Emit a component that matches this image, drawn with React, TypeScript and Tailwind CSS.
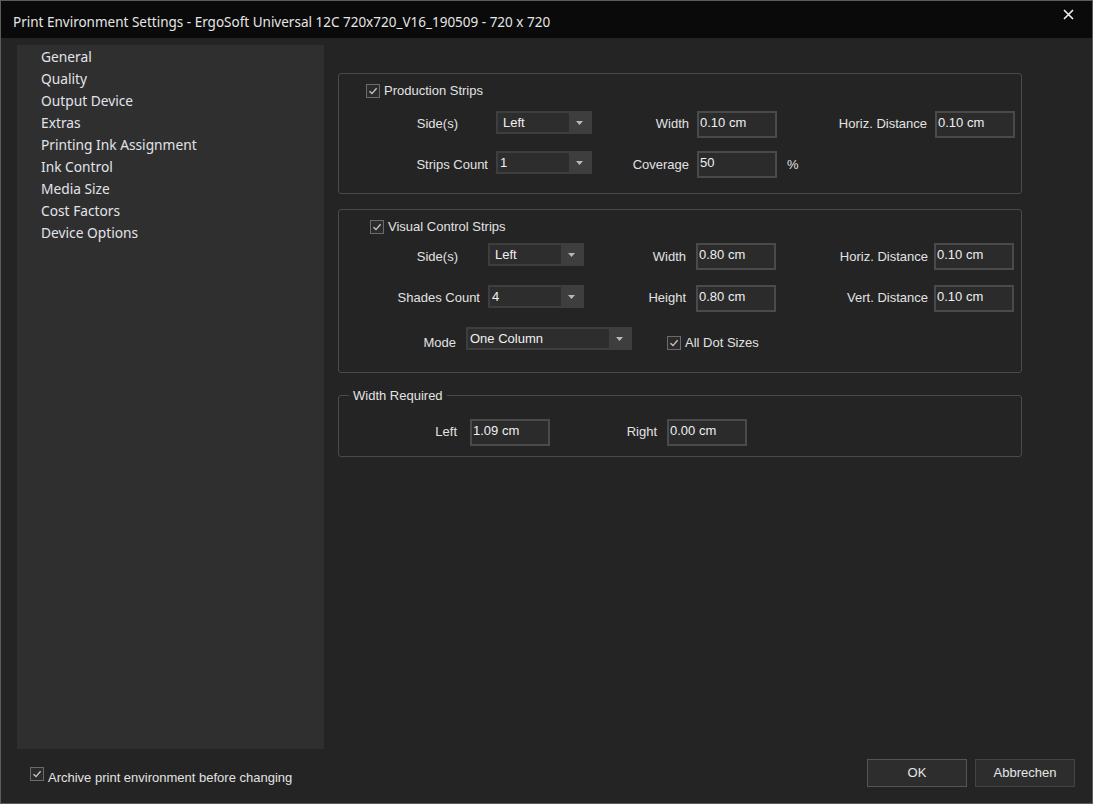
import React, { useState } from 'react';

const Check: React.FC<{ checked: boolean; onToggle: () => void }> = ({ checked, onToggle }) => (
  <button
    type="button"
    onClick={onToggle}
    className="flex h-[14px] w-[14px] shrink-0 items-center justify-center border border-[#6b6b6b] bg-[#2b2b2b]"
  >
    {checked && (
      <svg width="10" height="10" viewBox="0 0 10 10" fill="none">
        <path d="M1.5 5.2 L4 7.6 L8.6 2.2" stroke="#c4c4c4" strokeWidth="1.4" />
      </svg>
    )}
  </button>
);

const Combo: React.FC<{ value: string; w: string; pad: string }> = ({ value, w, pad }) => (
  <div className={`${w} flex h-[23px] shrink-0 bg-[#3e3e3e] p-[2px]`}>
    <div className={`flex flex-1 items-center bg-[#2d2d2d] ${pad} text-[#f0f0f0]`}>{value}</div>
    <div className="flex w-[21px] items-center justify-center">
      <svg width="7" height="4" viewBox="0 0 7 4">
        <path d="M0 0 H7 L3.5 4 Z" fill="#b8b8b8" />
      </svg>
    </div>
  </div>
);

const TextBox: React.FC<{ value: string; ml: string }> = ({ value, ml }) => (
  <div className={`${ml} h-[27px] w-[80px] shrink-0 border-2 border-[#4a4a4a] bg-[#2b2b2b] pl-[1px] leading-[19px] text-[#f0f0f0]`}>
    {value}
  </div>
);

const navItems = [
  'General',
  'Quality',
  'Output Device',
  'Extras',
  'Printing Ink Assignment',
  'Ink Control',
  'Media Size',
  'Cost Factors',
  'Device Options',
];

export default function App() {
  const [production, setProduction] = useState(true);
  const [visual, setVisual] = useState(true);
  const [allDots, setAllDots] = useState(true);
  const [archive, setArchive] = useState(true);

  return (
    <div className="flex h-[804px] w-[1093px] flex-col border border-[#5c5c5c] bg-[#242424] font-['Liberation_Sans',Arial,sans-serif] text-[13px] text-[#e2e2e2]">
      {/* title bar */}
      <div className="flex h-[37px] shrink-0 items-start justify-between bg-[#0a0a0a] pl-[12px] pr-[18px]">
        <span className="pt-[12px] font-['Noto_Sans',sans-serif] text-[13.5px] leading-[18px] text-[#e6e6e6]">
          Print Environment Settings - ErgoSoft Universal 12C 720x720_V16_190509 - 720 x 720
        </span>
        <svg className="mt-[8px]" width="11" height="11" viewBox="0 0 11 11">
          <path d="M1 1 L10 10 M10 1 L1 10" stroke="#f2f2f2" strokeWidth="1.6" />
        </svg>
      </div>

      <div className="flex flex-1 pl-[16px] pt-[7px]">
        {/* navigation */}
        <nav className="h-[704px] w-[307px] shrink-0 bg-[#2f2f2f] pl-[24px] pt-[1px] font-['Noto_Sans',sans-serif] text-[13.75px] leading-[22px] text-[#e2e4ea]">
          {navItems.map((item) => (
            <div key={item}>{item}</div>
          ))}
        </nav>

        {/* content */}
        <div className="ml-[14px] w-[684px] pt-[28px]">
          {/* production strips */}
          <div className="rounded-[3px] border border-[#4a4a4a] pb-[15px] pt-[10px]">
            <div className="flex items-center pl-[27px]">
              <Check checked={production} onToggle={() => setProduction(!production)} />
              <span className="ml-[4px] leading-[14px]">Production Strips</span>
            </div>
            <div className="mt-[13px] flex h-[27px] items-start">
              <span className="w-[119px] text-right leading-[25px]">Side(s)</span>
              <div className="ml-[38px]">
                <Combo value="Left" w="w-[96px]" pad="pl-[5px]" />
              </div>
              <span className="w-[97px] text-right leading-[25px]">Width</span>
              <TextBox value="0.10 cm" ml="ml-[8px]" />
              <span className="w-[150px] text-right leading-[25px]">Horiz. Distance</span>
              <TextBox value="0.10 cm" ml="ml-[8px]" />
            </div>
            <div className="mt-[13px] flex h-[27px] items-start">
              <span className="w-[149px] text-right leading-[28px]">Strips Count</span>
              <div className="ml-[8px]">
                <Combo value="1" w="w-[96px]" pad="pl-[2px]" />
              </div>
              <span className="w-[97px] text-right leading-[28px]">Coverage</span>
              <TextBox value="50" ml="ml-[8px]" />
              <span className="ml-[10px] leading-[28px]">%</span>
            </div>
          </div>

          {/* visual control strips */}
          <div className="mt-[15px] rounded-[3px] border border-[#4a4a4a] pb-[22px] pt-[10px]">
            <div className="flex items-center pl-[31px]">
              <Check checked={visual} onToggle={() => setVisual(!visual)} />
              <span className="ml-[4px] leading-[14px]">Visual Control Strips</span>
            </div>
            <div className="mt-[9px] flex h-[27px] items-start">
              <span className="w-[119px] text-right leading-[27px]">Side(s)</span>
              <div className="ml-[30px]">
                <Combo value="Left" w="w-[96px]" pad="pl-[5px]" />
              </div>
              <span className="w-[102px] text-right leading-[27px]">Width</span>
              <TextBox value="0.80 cm" ml="ml-[10px]" />
              <span className="w-[152px] text-right leading-[27px]">Horiz. Distance</span>
              <TextBox value="0.10 cm" ml="ml-[6px]" />
            </div>
            <div className="mt-[15px] flex h-[27px] items-start">
              <span className="w-[141px] text-right leading-[25px]">Shades Count</span>
              <div className="ml-[8px]">
                <Combo value="4" w="w-[96px]" pad="pl-[2px]" />
              </div>
              <span className="w-[102px] text-right leading-[25px]">Height</span>
              <TextBox value="0.80 cm" ml="ml-[10px]" />
              <span className="w-[152px] text-right leading-[25px]">Vert. Distance</span>
              <TextBox value="0.10 cm" ml="ml-[6px]" />
            </div>
            <div className="mt-[15px] flex h-[23px] items-start">
              <span className="w-[117px] text-right leading-[31px]">Mode</span>
              <div className="ml-[10px]">
                <Combo value="One Column" w="w-[166px]" pad="pl-[2px]" />
              </div>
              <div className="ml-[35px] flex items-center pt-[8px]">
                <Check checked={allDots} onToggle={() => setAllDots(!allDots)} />
                <span className="ml-[4px] pt-[1px] leading-[14px]">All Dot Sizes</span>
              </div>
            </div>
          </div>

          {/* width required */}
          <fieldset className="mt-[15px] rounded-[3px] border border-[#4a4a4a] pb-[10px]">
            <legend className="ml-[10px] px-[4px] leading-[15px]">Width Required</legend>
            <div className="mt-[16px] flex h-[27px] items-start">
              <span className="w-[118px] text-right leading-[25px]">Left</span>
              <TextBox value="1.09 cm" ml="ml-[13px]" />
              <span className="w-[107px] text-right leading-[25px]">Right</span>
              <TextBox value="0.00 cm" ml="ml-[10px]" />
            </div>
          </fieldset>
        </div>
      </div>

      {/* footer */}
      <div className="mb-[16px] flex h-[28px] shrink-0 items-center justify-between pl-[29px] pr-[17px]">
        <div className="flex items-center pt-[1px]">
          <Check checked={archive} onToggle={() => setArchive(!archive)} />
          <span className="ml-[4px] pt-[8px] leading-[14px]">Archive print environment before changing</span>
        </div>
        <div className="flex gap-[8px]">
          <button type="button" className="h-[28px] w-[100px] border border-[#555555] bg-[#2d2d2d] text-[#e6e6e6]">
            OK
          </button>
          <button type="button" className="h-[28px] w-[100px] border border-[#444444] bg-[#2d2d2d] text-[#e6e6e6]">
            Abbrechen
          </button>
        </div>
      </div>
    </div>
  );
}
